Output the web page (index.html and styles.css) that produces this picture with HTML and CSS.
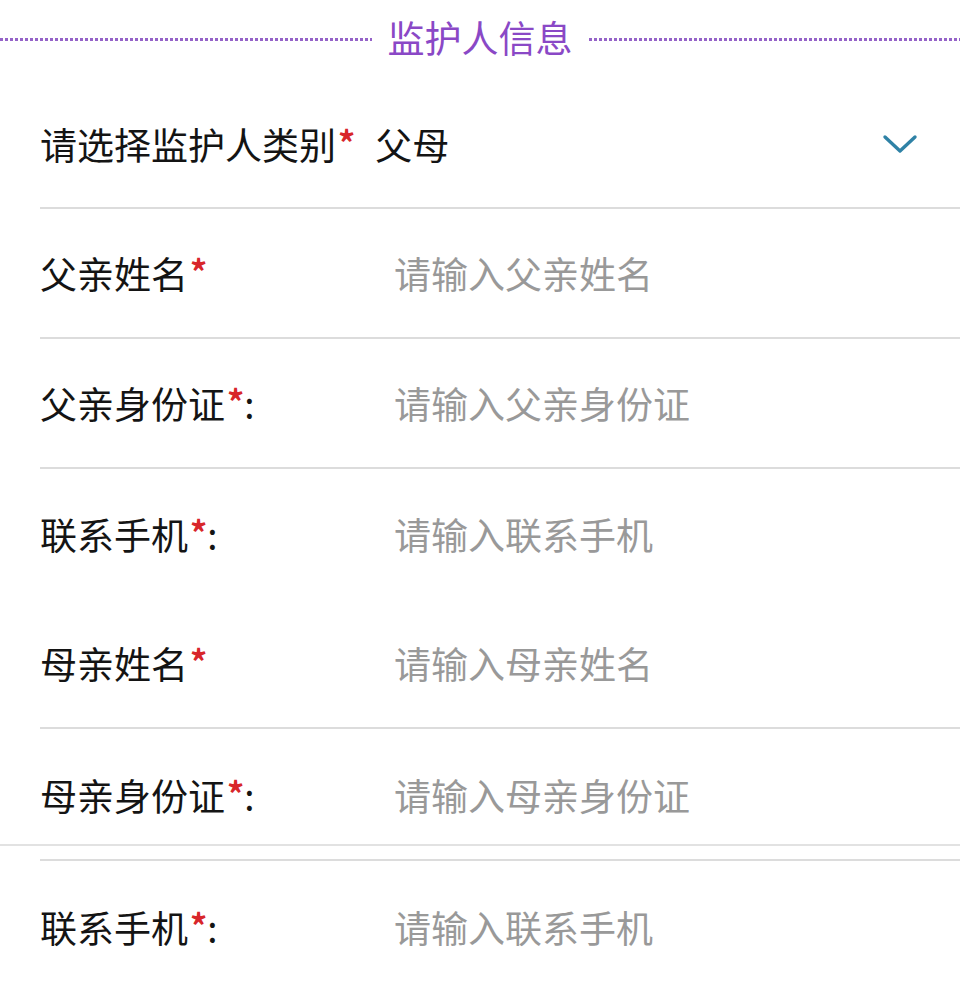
FILE: index.html
```html
<!DOCTYPE html>
<html lang="zh-CN">
<head>
<meta charset="utf-8">
<link rel="stylesheet" href="styles.css">
</head>
<body>
<div class="page">
  <div class="header">
    <span class="dots"></span>
    <h2 class="title">监护人信息</h2>
    <span class="dots"></span>
  </div>
  <div class="row r1 line">
    <span class="label">请选择监护人类别<i class="req">*</i></span>
    <span class="value">父母</span>
    <svg class="chev" width="36" height="20" viewBox="0 0 36 20"><path d="M3 3 L18 17 L33 3" fill="none" stroke="#2f82a6" stroke-width="3.4" stroke-linecap="round" stroke-linejoin="round"/></svg>
  </div>
  <div class="row line">
    <span class="label lw">父亲姓名<i class="req">*</i></span>
    <span class="ph">请输入父亲姓名</span>
  </div>
  <div class="row line">
    <span class="label lw">父亲身份证<i class="req">*</i>:</span>
    <span class="ph">请输入父亲身份证</span>
  </div>
  <div class="row">
    <span class="label lw">联系手机<i class="req">*</i>:</span>
    <span class="ph">请输入联系手机</span>
  </div>
  <div class="row line">
    <span class="label lw">母亲姓名<i class="req">*</i></span>
    <span class="ph">请输入母亲姓名</span>
  </div>
  <div class="row r6">
    <span class="label lw">母亲身份证<i class="req">*</i>:</span>
    <span class="ph">请输入母亲身份证</span>
  </div>
  <div class="full"></div>
  <div class="row r7">
    <span class="label lw">联系手机<i class="req">*</i>:</span>
    <span class="ph">请输入联系手机</span>
  </div>
</div>
</body>
</html>
```
FILE: styles.css
```css
html, body { margin: 0; padding: 0; background: #fff; }
body { font-family: "Noto Sans CJK SC", "Noto Sans", sans-serif; }
.page { width: 960px; height: 999px; overflow: hidden; }
.header { height: 81px; display: flex; align-items: center; }
.dots {
  flex: 1; height: 3px;
  background: repeating-linear-gradient(90deg, #9563c8 0 3px, transparent 3px 5px);
  margin-top: -2px;
}
.title {
  margin: 0 16px; font-size: 37px; font-weight: 400; color: #8a48c6;
  line-height: 1; margin-top: -7px;
}
.row {
  height: 130px; box-sizing: border-box; margin-left: 40px;
  display: flex; align-items: center; font-size: 37px; color: #141414;
}
.line { border-bottom: 2px solid #dcdcdc; }
.r1 { height: 128px; padding-right: 42px; }
.label { white-space: nowrap; }
.lw { width: 354px; }
.req { font-style: normal; color: #d8262a; font-size: 34px; font-weight: 700; vertical-align: 4px; margin-left: 2px; }
.value { margin-left: 20px; flex: 1; }
.ph { color: #999; }
.chev { display: block; }
.r6 { height: 115px; padding-top: 16px; }
.full { height: 2px; background: #e2e2e2; }
.r7 { height: 133px; border-top: 2px solid #dcdcdc; margin-top: 13px; }
```
